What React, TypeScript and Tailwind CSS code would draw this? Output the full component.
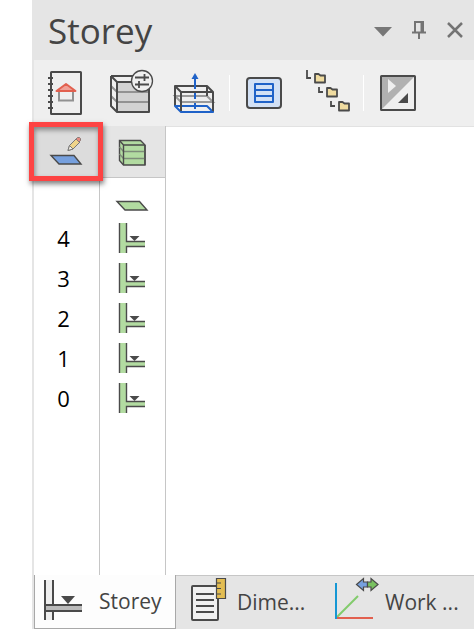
import type { ReactNode } from "react";

const DARK = "#4a4a4a";
const GREEN = "#b2dba1";
const BLUE = "#1f62c8";

function ToolIcon({ children }: { children: ReactNode }) {
    return (
        <svg viewBox="0 0 48 48" className="h-12 w-12" fill="none" stroke={DARK} strokeWidth="2" aria-hidden="true">
            {children}
        </svg>
    );
}

function CellIcon({ children }: { children: ReactNode }) {
    return (
        <svg viewBox="0 0 36 36" className="mx-auto block h-9 w-9" fill="none" stroke={DARK} strokeWidth="1.4" aria-hidden="true">
            {children}
        </svg>
    );
}

function TabIcon({ children }: { children: ReactNode }) {
    return (
        <svg viewBox="0 0 40 48" className="h-12 w-10 shrink-0 overflow-visible" fill="none" stroke={DARK} strokeWidth="2" aria-hidden="true">
            {children}
        </svg>
    );
}

function BookIcon() {
    return (
        <ToolIcon>
            <rect x="9" y="3" width="30" height="42" rx="0.5" />
            <path d="M6 9h5M6 15h5M6 21h5M6 27h5M6 33h5M6 39h5" />
            <path d="M17 22v9.5h14V22" stroke="#929292" />
            <path d="M24 15l9.5 7h-19z" fill="#f0a096" stroke="#e2604f" strokeLinejoin="round" />
        </ToolIcon>
    );
}

function StoreySettingsIcon() {
    return (
        <ToolIcon>
            <path d="M11 13h32v30H11z" fill="#d2d2d2" stroke="none" />
            <path d="M5 17l6 6h32M5 27l6 6h32" stroke="#929292" />
            <path d="M5 7h25M5 7v30l6 6h32V13H11L5 7M11 13v30" strokeLinejoin="round" />
            <circle cx="36" cy="12" r="10.5" fill="#efefef" strokeWidth="1.3" />
            <path d="M29 8.5h14M38.5 5v7M29 15.5h14M33 12v7" strokeWidth="1.8" />
        </ToolIcon>
    );
}

function StoreyLevelsIcon() {
    return (
        <ToolIcon>
            <path d="M5 27h32l6 6H11z" stroke="#9a9a9a" />
            <path d="M5 17h32l6 6H11zM5 17v20M37 17v10M11 23v20M43 23v20" strokeLinejoin="round" />
            <path d="M5 37h32l6 6H11z" stroke={BLUE} strokeLinejoin="round" />
            <path d="M11 23v19M43 23v19" />
            <path d="M25 9v11M25 24v6M25 34v6" stroke={BLUE} />
            <path d="M25 4l3.5 6h-7z" fill={BLUE} stroke="none" />
        </ToolIcon>
    );
}

function ListIcon() {
    return (
        <ToolIcon>
            <rect x="7" y="9" width="34" height="30" rx="3" fill="#d3e1f5" />
            <path d="M15 15h18v18H15zM15 21h18M15 27h18" stroke={BLUE} strokeLinejoin="round" />
        </ToolIcon>
    );
}

function FolderTreeIcon() {
    const folder = "h3.5l2 1.5h4.5v7h-10z";
    return (
        <ToolIcon>
            <path d="M3 1v8h4M15 18v5h4M27 32v5h4" strokeWidth="1.8" />
            <g fill="#f0dca0" strokeWidth="1.8" strokeLinejoin="round">
                <path d={`M11 5${folder}`} />
                <path d={`M23 19${folder}`} />
                <path d={`M35 33${folder}`} />
            </g>
        </ToolIcon>
    );
}

function ContrastIcon() {
    return (
        <ToolIcon>
            <path d="M7 7h34L7 41z" fill="#b1b1b1" stroke="none" />
            <path d="M14 10l8 7-8 7z" fill="#efefef" stroke="none" />
            <path d="M34 24v10H24z" fill={DARK} stroke="none" />
            <rect x="7" y="7" width="34" height="34" rx="0.5" />
        </ToolIcon>
    );
}

function EditPlaneIcon() {
    return (
        <CellIcon>
            <path d="M3 21.5h23l7 8.5H11z" fill="#76a0de" />
            <path d="M20 16.5l1.5-5 7-7 3.5 3.5-7 7z" fill="#efd48a" stroke="#777" strokeWidth="1" />
            <path d="M28 5l1.5-1.5h2l1 1v2L31 8z" fill="#e58b82" stroke="#8a7a78" strokeWidth="1" />
            <path d="M20 16.5l1.5-5 3.5 3.5z" fill="#f4f0e8" stroke="#777" strokeWidth="1" />
        </CellIcon>
    );
}

function PlaneIcon() {
    return (
        <CellIcon>
            <path d="M3 21.5h22.5L33 30H11z" fill={GREEN} />
        </CellIcon>
    );
}

function BuildingIcon() {
    return (
        <CellIcon>
            <path d="M5.5 6.5h21l4.5 4.500v20H9.5l-4-4.500z" fill={GREEN} />
            <path d="M5.5 13l4 4.500H31M5.5 20l4 4.500H31" stroke="#7e8c7a" />
            <path d="M5.5 6.5l4 4.500H31M9.5 11v20M31 11v20" />
        </CellIcon>
    );
}

function LevelIcon() {
    return (
        <CellIcon>
            <path d="M5 3h7v30H5zM11 22h20v5H11z" fill={GREEN} stroke="none" />
            <path d="M5.5 3v30M12.5 3v18.500h18.500M12.5 33v-6.500h18.500" />
            <path d="M15.500 16h10l-5 5z" fill={DARK} stroke="none" />
        </CellIcon>
    );
}

const tools = [
    [
        { label: "Storey manager", icon: <BookIcon /> },
        { label: "Storey settings", icon: <StoreySettingsIcon /> },
        { label: "Storey levels", icon: <StoreyLevelsIcon /> },
    ],
    [
        { label: "List view", icon: <ListIcon /> },
        { label: "Expand tree", icon: <FolderTreeIcon /> },
    ],
    [{ label: "Invert selection", icon: <ContrastIcon /> }],
];

const storeys = ["4", "3", "2", "1", "0"];

export default function App() {
    return (
        <div className="h-screen bg-white pl-8 font-['Open_Sans','Noto_Sans',sans-serif]">
            <section className="flex h-full flex-col border-l-2 border-[#e5e5e5]" aria-label="Storey">
                <header className="flex h-15 shrink-0 items-center bg-[#e5e5e5] pr-px pl-3.5">
                    <h1 className="flex-1 pt-0.5 text-[35px] leading-14 text-[#444]">Storey</h1>
                    <button type="button" aria-label="Options" className="flex h-9 w-9 items-center justify-center">
                        <svg viewBox="0 0 20 20" className="h-5 w-5">
                            <path d="M1 7h18l-9 9.5z" fill="#777" />
                        </svg>
                    </button>
                    <button type="button" aria-label="Pin" className="flex h-9 w-9 items-center justify-center">
                        <svg viewBox="0 0 20 20" className="h-5 w-5" fill="none" stroke="#747474" strokeWidth="2">
                            <path d="M6 12V2h8v10M3 12.5h14M10 13v6" />
                            <path d="M13 2v10" strokeWidth="3" />
                        </svg>
                    </button>
                    <button type="button" aria-label="Close" className="flex h-9 w-9 items-center justify-center">
                        <svg viewBox="0 0 20 20" className="h-5 w-5" fill="none" stroke="#747474" strokeWidth="2.5">
                            <path d="M3 3l14 14M17 3L3 17" />
                        </svg>
                    </button>
                </header>

                <div role="toolbar" aria-label="Storey tools" className="flex h-[66px] shrink-0 items-center bg-[#efefef]">
                    {tools.map((group, index) => (
                        <div key={index} className="flex items-center">
                            {index > 0 && <div className="mr-0.5 ml-[3px] h-9 w-px bg-white" />}
                            {group.map((tool) => (
                                <button key={tool.label} type="button" aria-label={tool.label} className="flex h-12 w-16 items-center justify-center">
                                    {tool.icon}
                                </button>
                            ))}
                        </div>
                    ))}
                </div>

                <div className="min-h-0 flex-1">
                    <table className="h-full w-full table-fixed border-separate border-spacing-0">
                        <colgroup>
                            <col className="w-[66px]" />
                            <col className="w-[66px]" />
                            <col />
                        </colgroup>
                        <thead>
                            <tr className="h-[52px]">
                                <th className="relative border-r border-b border-[#c6c6c6] bg-[#dcdcdc] p-0 pr-px">
                                    <button type="button" aria-label="Edit active storey" className="block w-full">
                                        <EditPlaneIcon />
                                    </button>
                                    <span className="pointer-events-none absolute -top-1 -right-1 -bottom-1 -left-[5px] border-5 border-[#fd4343] shadow-[1px_3px_5px_rgba(0,0,0,0.5),inset_1px_3px_5px_rgba(0,0,0,0.4)]" />
                                </th>
                                <th className="border-r border-b border-[#c6c6c6] bg-[#e5e5e5] p-0 pr-px">
                                    <button type="button" aria-label="Visible storeys" className="block w-full">
                                        <BuildingIcon />
                                    </button>
                                </th>
                                <td className="border-t border-[#e2e2e2] p-0" />
                            </tr>
                        </thead>
                        <tbody className="text-center text-[22px] leading-7 text-black">
                            <tr className="h-10">
                                <td className="border-r border-[#c6c6c6] p-0" />
                                <td className="border-r border-[#c6c6c6] p-0 pr-px">
                                    <PlaneIcon />
                                </td>
                                <td className="p-0" />
                            </tr>
                            {storeys.map((storey) => (
                                <tr key={storey} className="h-10">
                                    <td className="border-r border-[#c6c6c6] p-0 pr-1.5">{storey}</td>
                                    <td className="border-r border-[#c6c6c6] p-0 pr-px">
                                        <LevelIcon />
                                    </td>
                                    <td className="p-0" />
                                </tr>
                            ))}
                            <tr>
                                <td className="border-r border-[#c6c6c6] p-0" />
                                <td className="border-r border-[#c6c6c6] p-0" />
                                <td className="p-0" />
                            </tr>
                        </tbody>
                    </table>
                </div>

                <div role="tablist" className="flex h-[54px] shrink-0 bg-[#e5e5e5] text-[21px] leading-7 whitespace-nowrap text-[#444]">
                    <button type="button" role="tab" aria-selected="true" className="flex w-[142px] shrink-0 items-center gap-4 border-r border-b border-l border-[#a8a8a8] bg-[#fdfdfd] pb-px pl-2">
                        <TabIcon>
                            <path d="M2 3h8v40H2z" fill="#eee" stroke="none" />
                            <path d="M2 28h37v6H2z" fill="#bbb" stroke="none" />
                            <path d="M2 3v40M10 3v25M10 34v9M2 28h37M2 34h37" />
                            <path d="M18 19h14l-7 8z" fill={DARK} stroke="none" />
                        </TabIcon>
                        Storey
                    </button>
                    <button type="button" role="tab" aria-selected="false" className="flex w-[148px] shrink-0 items-center gap-2.5 border-t border-[#c6c6c6] pb-0.5 pl-[11px]">
                        <TabIcon>
                            <rect x="5" y="8" width="26" height="34" rx="1" fill="#f0f0f0" />
                            <path d="M9 16h18M9 22h18M9 28h18M9 34h18" />
                            <path d="M29.5 0.5h9v20h-9z" fill="#e3bd52" strokeWidth="1.2" />
                            <path d="M30 5h4M30 10.5h4M30 16h4" strokeWidth="1" />
                        </TabIcon>
                        Dime...
                    </button>
                    <button type="button" role="tab" aria-selected="false" className="flex min-w-0 flex-1 items-center gap-2.5 border-t border-[#c6c6c6] pb-0.5 pl-[11px]">
                        <TabIcon>
                            <path d="M2 39l21-21" stroke="#82cb6b" />
                            <path d="M1 40h37" stroke="#e2604f" />
                            <path d="M1 5v36" stroke="#1597d4" />
                            <g strokeWidth="1.2">
                                <path d="M21.5 6.5l7-6v3.5h4v5h-4v3.5z" fill="#76a0de" />
                                <path d="M43 6.5l-7-6v3.5h-3.5v5H36v3.5z" fill="#78c15f" />
                            </g>
                        </TabIcon>
                        Work ...
                    </button>
                </div>
            </section>
        </div>
    );
}
